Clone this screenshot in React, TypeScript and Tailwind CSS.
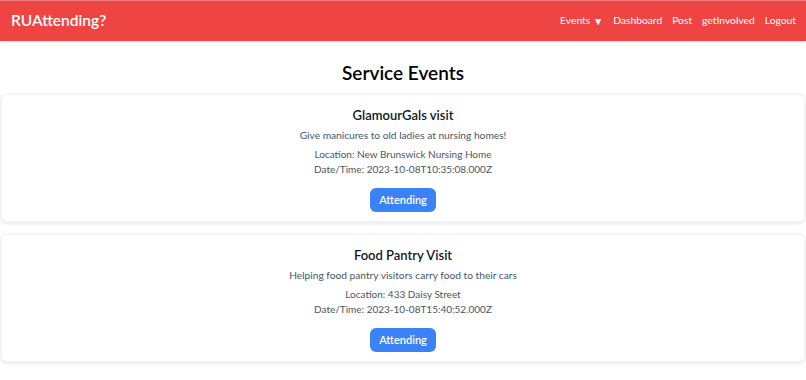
import React from 'react';

interface ServiceEvent {
  title: string;
  description: string;
  location: string;
  dateTime: string;
}

const events: ServiceEvent[] = [
  {
    title: 'GlamourGals visit',
    description: 'Give manicures to old ladies at nursing homes!',
    location: 'New Brunswick Nursing Home',
    dateTime: '2023-10-08T10:35:08.000Z',
  },
  {
    title: 'Food Pantry Visit',
    description: 'Helping food pantry visitors carry food to their cars',
    location: '433 Daisy Street',
    dateTime: '2023-10-08T15:40:52.000Z',
  },
];

const Navbar = () => (
  <nav className="h-[41px] bg-[#ef4444] border-t border-[#f27c7c] shadow flex items-center justify-between pl-[11px] pr-[10px] text-white">
    <span className="text-[15.5px] font-semibold">RUAttending?</span>
    <div className="flex items-center gap-[10px] text-[10.3px]">
      <span className="flex items-center gap-[3px]">
        Events <span className="text-[10px] leading-none">▼</span>
      </span>
      <span>Dashboard</span>
      <span>Post</span>
      <span>getInvolved</span>
      <span>Logout</span>
    </div>
  </nav>
);

const EventCard = ({ event }: { event: ServiceEvent }) => (
  <div className="mx-px bg-white rounded-md border border-gray-100 shadow-[0_1px_4px_rgba(0,0,0,0.12)] pt-[10px] pb-[9px] flex flex-col items-center text-center">
    <h2 className="text-[13px] leading-5 font-semibold text-gray-900">{event.title}</h2>
    <p className="text-[10.2px] leading-4 text-gray-600 mt-[2px]">{event.description}</p>
    <div className="mt-[4px] text-[10px] leading-[15px] text-gray-600">
      <p>Location: {event.location}</p>
      <p>Date/Time: {event.dateTime}</p>
    </div>
    <button className="mt-[11px] h-6 w-[66px] rounded-md bg-[#3b82f6] text-white text-[11px] font-semibold">
      Attending
    </button>
  </div>
);

export default function App() {
  return (
    <div className="min-h-screen bg-white" style={{ fontFamily: 'Lato, "Open Sans", sans-serif' }}>
      <Navbar />
      <h1 className="text-center text-[19px] leading-7 font-semibold text-black mt-[18px] mb-[7px]">Service Events</h1>
      <div className="flex flex-col gap-3">
        {events.map((e) => (
          <EventCard key={e.title} event={e} />
        ))}
      </div>
    </div>
  );
}
